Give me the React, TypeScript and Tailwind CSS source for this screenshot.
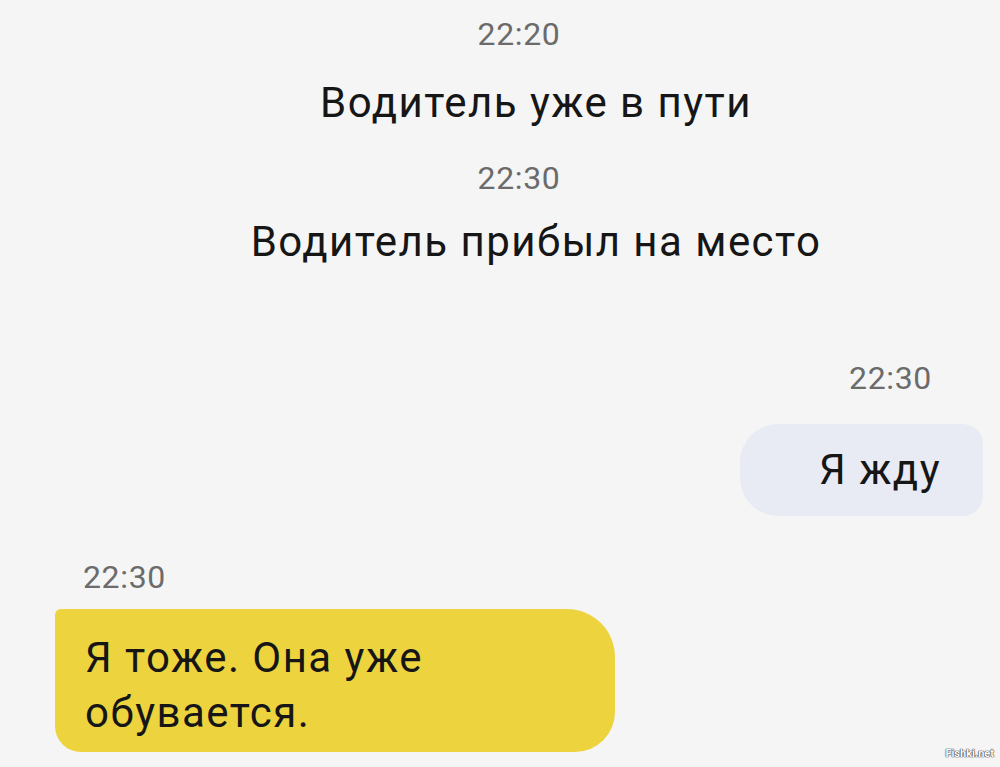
import React from "react";

const font = { fontFamily: "Roboto, 'Noto Sans', sans-serif" };

export default function App() {
  return (
    <div
      className="relative w-[1000px] h-[767px] overflow-hidden bg-[#f5f5f5] text-[#161616]"
      style={font}
    >
      <div className="flex flex-col items-center pl-[72px] pt-[14px]">
        <div className="mr-[34px] text-[32px] leading-[40px] tracking-[0.02em] text-[#6b6b6b]">22:20</div>
        <div className="mt-[25px] text-[42px] leading-[48px] tracking-[0.035em]">Водитель уже в пути</div>
        <div className="mr-[34px] mt-[31px] text-[32px] leading-[40px] tracking-[0.02em] text-[#6b6b6b]">22:30</div>
        <div className="mt-[20px] text-[42px] leading-[48px] tracking-[0.035em]">Водитель прибыл на место</div>
      </div>

      <div className="flex flex-col items-end pr-[17px] mt-[92px]">
        <div className="mr-[51px] text-[32px] leading-[40px] tracking-[0.02em] text-[#6b6b6b]">22:30</div>
        <div className="mt-[26px] w-[243px] h-[92px] flex items-center justify-end pr-[42px] bg-[#e9ebf4] rounded-l-[38px] rounded-r-[20px]">
          <span className="text-[42px] leading-[48px] tracking-[0.035em]">Я жду</span>
        </div>
      </div>

      <div className="flex flex-col items-start pl-[55px] mt-[41px]">
        <div className="ml-[28px] text-[32px] leading-[40px] tracking-[0.02em] text-[#6b6b6b]">22:30</div>
        <div className="mt-[12px] w-[560px] h-[143px] bg-[#edd43f] rounded-tl-[6px] rounded-bl-[26px] rounded-tr-[48px] rounded-br-[40px] pl-[30px] pt-[21px]">
          <div className="text-[42px] leading-[55px] tracking-[0.035em] w-[400px]">Я тоже. Она уже обувается.</div>
        </div>
      </div>

      <div
        className="absolute right-[6px] bottom-[5px] text-[11px] font-bold text-white"
        style={{ textShadow: "0 0 1px #333, 0 0 1px #333, 0 0 1px #333" }}
      >
        Fishki.net
      </div>
    </div>
  );
}
